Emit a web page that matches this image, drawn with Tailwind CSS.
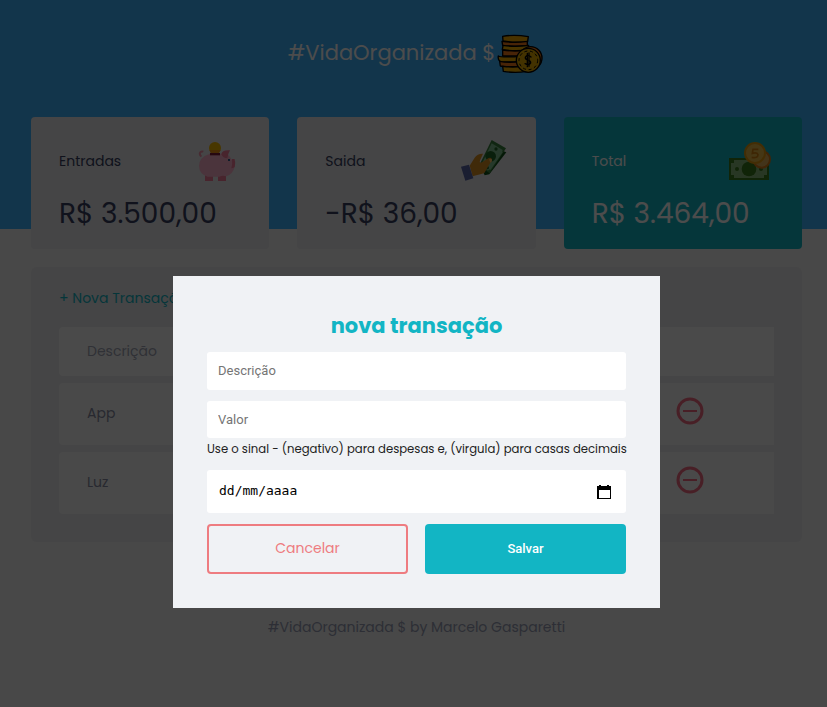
<!DOCTYPE html>
<html lang="pt-BR">
<head>
<meta charset="utf-8">
<meta name="viewport" content="width=device-width, initial-scale=1">
<title>#VidaOrganizada $</title>
<script src="https://cdn.jsdelivr.net/npm/@tailwindcss/browser@4"></script>
</head>
<body class="min-h-screen bg-[#f0f0f0] font-['Poppins','Inter',sans-serif] text-sm text-[#363f5f]">
<header class="h-[229px] bg-[#3cb1fa] pt-8 pl-[6px]">
  <h1 class="flex items-center justify-center text-[21px] leading-10 font-normal text-white">
    #VidaOrganizada $
    <svg class="ml-0.5 h-[42px] w-[48px]" viewBox="21 10 144 126" aria-hidden="true" stroke="#000" stroke-width="4" stroke-linejoin="round">
      <path fill="#f0a800" d="M38 23q36-6 77 1l-2 14q-34 6-74-1z"/>
      <path fill="#f07818" d="M36 38q38 6 76 0v12q-38 5-74 0z"/>
      <path fill="#f0b000" d="M39 50q36 6 77 0l-2 14q-38 5-77-1z"/>
      <path fill="#f07818" d="M38 64q38 6 72 0v18H38z"/>
      <path fill="#f0b000" d="M25 82q10 5 68 1v15q-52 4-64-1q-6-6-4-15z"/>
      <path fill="#f07818" d="M29 98q20 5 66 1v14q-50 3-64-1z"/>
      <path fill="#f0b000" d="M38 113q30 4 60 0l12 15q-34 6-70 0z"/>
      <circle cx="122" cy="88" r="34" fill="#f07818"/>
      <circle cx="115" cy="95" r="36" fill="#e0a800"/>
      <circle cx="115" cy="95" r="28" fill="none" stroke-width="3" stroke-dasharray="9 8"/>
      <path fill="none" stroke-width="4" stroke-linecap="round" d="M123 85q-5-6-14-3q-7 6 1 11q13 3 12 10q-4 8-17 2M112 74v40M117 73v40"/>
    </svg>
  </h1>
</header>

<main class="-mt-[112px] pr-[25px] pl-[31px]">
  <section class="grid grid-cols-3 gap-7" aria-label="Saldo">
    <div class="rounded bg-[#e6e6ea] px-7 pt-[23px] pb-[14px]">
      <h2 class="flex h-[42px] items-center justify-between">
        <span>Entradas</span>
        <svg class="mr-[3px] h-[42px] w-10" viewBox="24 30 120 126" aria-hidden="true">
          <circle cx="75" cy="54" r="18" fill="#f0b800"/><path fill="#f09010" d="M58 60h34l-7 12H64z"/>
          <path fill="none" stroke="#f090a8" stroke-width="6" d="M34 80q-8-8-2-14q3-3 8-1"/>
          <path fill="#f07898" d="M45 135h24v18H45zM84 135h24v18H84z"/>
          <path fill="#fab0c8" d="M60 71h50q11 6 16 20h8v20q-5 21-25 28q-11-4-21 1H53Q28 133 27 108Q27 81 60 71z"/>
          <path fill="#f07898" d="M94 73q2-14 26-12q-6 10-8 24q-13 0-18-12zM126 87h8v4q3 4 0 20q-5 4-10 4q4-13 2-28z"/>
          <path fill="#801838" d="M60 69h30v7H60z"/><path fill="#305888" d="M114 87h6v6h-6z"/>
        </svg>
      </h2>
      <p class="mt-[11px] text-[28px] leading-[42px] font-normal">R$ 3.500,00</p>
    </div>
    <div class="rounded bg-[#e6e6ea] px-7 pt-[23px] pb-[14px]">
      <h2 class="flex h-[42px] items-center justify-between">
        <span>Saida</span>
        <svg class="h-[44px] w-[48px]" viewBox="15 30 144 132" aria-hidden="true">
          <path fill="#105018" d="M104 51l50 19-51 66-14 3-6-12z"/>
          <path fill="#38803c" d="M110 33l43 25-49 75-32-23z"/>
          <path fill="#80c090" d="M110 43l33 20q-3 6 0 7l-36 52q-6-1-8 3l-20-17z"/>
          <circle cx="107" cy="82" r="16" fill="#206828"/><circle cx="123" cy="60" r="5" fill="#206828"/><circle cx="97" cy="116" r="5" fill="#206828"/>
          <path fill="#d88c20" d="M44 110l15-24q9-13 25-12l-8 18q-5 12 5 8l20-13q9-3 10 5q2 5-5 9l-18 31q-12 4-35 10z"/>
          <path fill="#ffc46a" d="M102 91q8-4 9 2q1 5-5 8z"/>
          <path fill="#5864a4" d="M18 113l24-6 13 41-24 7z"/>
        </svg>
      </h2>
      <p class="mt-[11px] text-[28px] leading-[42px] font-normal">-R$ 36,00</p>
    </div>
    <div class="rounded bg-[#12b5c4] px-7 pt-[23px] pb-[14px] text-white">
      <h2 class="flex h-[42px] items-center justify-between">
        <span>Total</span>
        <svg class="mr-[2px] h-[42px] w-[44px]" viewBox="24 30 132 126" aria-hidden="true">
          <path fill="#38781c" d="M27 84h120v66H27z"/><path fill="#88b878" d="M42 90h90v7h9v38h-9v9H42v-9h-9V99h9z"/>
          <circle cx="87" cy="117" r="22" fill="#38781c"/><circle cx="51" cy="117" r="6" fill="#38781c"/><circle cx="123" cy="117" r="6" fill="#38781c"/>
          <circle cx="125" cy="88" r="25" fill="#e0b058" stroke="#d87818" stroke-width="6"/>
          <circle cx="105" cy="69" r="30" fill="#e8b848" stroke="#e09810" stroke-width="6"/>
          <path fill="none" stroke="#d08010" stroke-width="5" d="M115 58H99l-2 12q14-4 17 4q0 11-19 8"/>
        </svg>
      </h2>
      <p class="mt-[11px] text-[28px] leading-[42px] font-normal">R$ 3.464,00</p>
    </div>
  </section>

  <section class="mt-[18px] rounded-md bg-[#e6e6ea] px-7 pt-[19px] pb-[21px]" aria-label="Transações">
    <a href="#" class="inline-block leading-6 text-[#12b5c4]">+ Nova Transação</a>
    <table class="mt-[10px] w-full border-separate border-spacing-x-0 border-spacing-y-[7px] text-left text-[#a0a4b4]">
      <thead>
        <tr class="h-[49px]"><th class="rounded-l bg-[#f9f9f9] px-7 pb-0.5 font-normal">Descrição</th><th class="w-[140px] bg-[#f9f9f9]"></th></tr>
      </thead>
      <tbody>
        <tr class="h-[62px]">
          <td class="rounded-l bg-[#f5f5f5] px-7 pb-0.5 text-[#868ba0]">App</td>
          <td class="bg-[#f5f5f5] pb-1.5 pl-[42px]"><button type="button" aria-label="Remover App" class="block h-7 w-7"><svg class="h-7 w-7" viewBox="0 0 28 28" fill="none" stroke="#f06a80" aria-hidden="true"><circle cx="14" cy="14" r="12" stroke-width="3"/><path stroke-width="2" d="M7 14h14"/></svg></button></td>
        </tr>
        <tr class="h-[62px]">
          <td class="rounded-l bg-[#f5f5f5] px-7 pb-0.5 text-[#868ba0]">Luz</td>
          <td class="bg-[#f5f5f5] pb-1.5 pl-[42px]"><button type="button" aria-label="Remover Luz" class="block h-7 w-7"><svg class="h-7 w-7" viewBox="0 0 28 28" fill="none" stroke="#f06a80" aria-hidden="true"><circle cx="14" cy="14" r="12" stroke-width="3"/><path stroke-width="2" d="M7 14h14"/></svg></button></td>
        </tr>
      </tbody>
    </table>
  </section>
</main>

<footer class="mt-[75px] pl-[6px] text-center leading-5 text-[#969cb3]">#VidaOrganizada $ by Marcelo Gasparetti</footer>

<div class="fixed inset-0 flex items-start justify-center overflow-auto bg-black/70 pt-[276px] pl-[6px]">
  <div role="dialog" aria-modal="true" aria-labelledby="modal-title" class="w-full max-w-[487px] bg-[#f0f2f5] p-[34px]">
    <form>
      <h2 id="modal-title" class="text-center text-[21px] leading-8 font-bold text-[#12b5c4]">nova transação</h2>
      <label for="description" class="sr-only">Descrição</label>
      <input id="description" type="text" placeholder="Descrição" class="mt-[10px] block h-[38px] w-full rounded-[3px] bg-white px-[11px] pb-0.5 font-[Roboto,sans-serif] text-[13px] text-black placeholder:text-[#757575]">
      <label for="amount" class="sr-only">Valor</label>
      <input id="amount" type="text" placeholder="Valor" class="mt-[11px] block h-[37px] w-full rounded-[3px] bg-white px-[11px] font-[Roboto,sans-serif] text-[13px] text-black placeholder:text-[#757575]">
      <p class="text-[length:smaller] leading-[22px] whitespace-nowrap text-[#222]">Use o sinal - (negativo) para despesas e, (virgula) para casas decimais</p>
      <label for="date" class="sr-only">Data</label>
      <div class="mt-[10px] flex h-[43px] items-center rounded-[3px] bg-white pr-[14px] pl-3">
        <input id="date" type="text" placeholder="dd/mm/aaaa" class="min-w-0 flex-1 bg-transparent font-['DejaVu_Sans_Mono',monospace] text-[13px] text-black outline-none placeholder:text-black">
        <button type="button" aria-label="Abrir calendário"><svg class="h-4 w-4" viewBox="0 0 16 16" aria-hidden="true"><path fill="#000" fill-rule="evenodd" d="M3 1h2v1h6V1h2v1h2v13H1V2h2zM3 6v8h11V6z"/></svg></button>
      </div>
      <div class="mt-[11px] grid grid-cols-2 gap-[17px]">
        <a href="#" class="flex h-[50px] items-center justify-center rounded border-2 border-[#ee7c80] pb-0.5 text-[#ee7c80]">Cancelar</a>
        <button class="h-[50px] rounded bg-[#12b5c4] font-[Roboto,sans-serif] text-[13px] font-medium text-white">Salvar</button>
      </div>
    </form>
  </div>
</div>
</body>
</html>
